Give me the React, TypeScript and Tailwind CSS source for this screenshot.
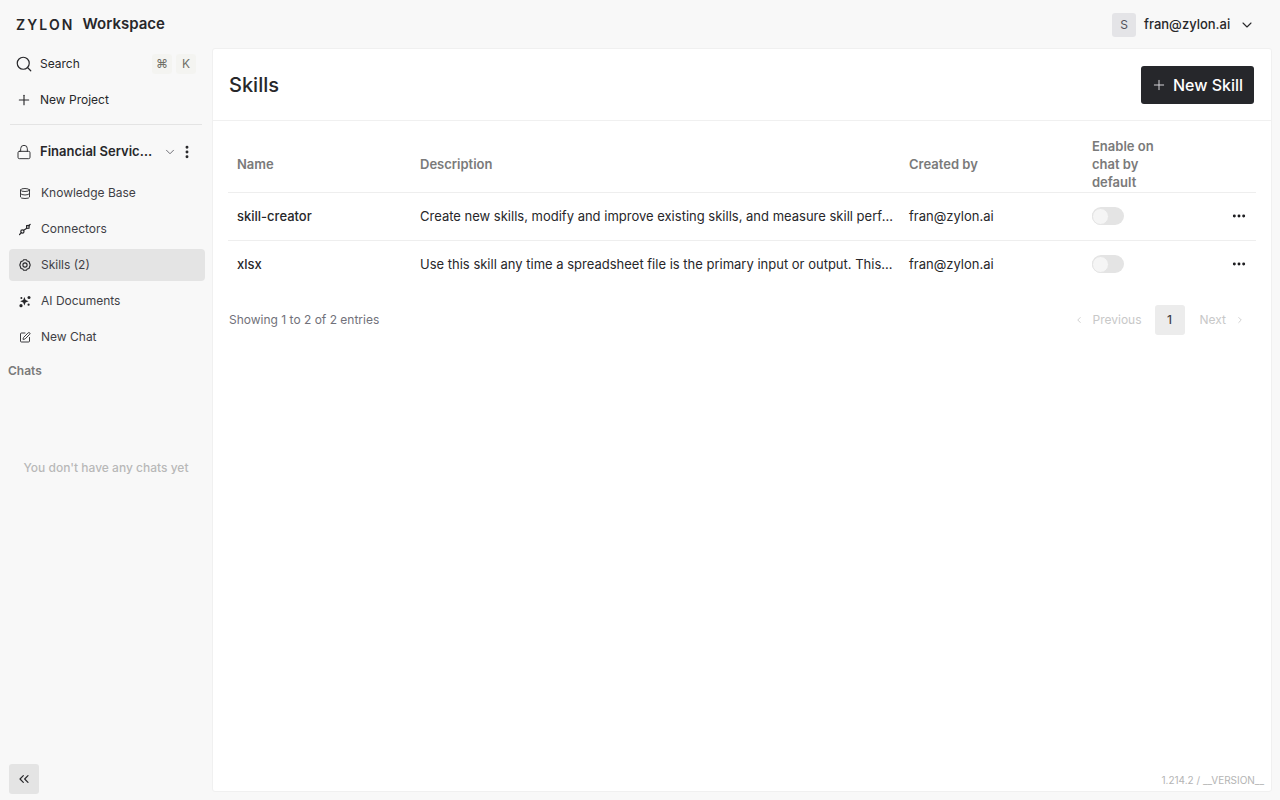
import { ChevronDown, ChevronLeft, ChevronRight, ChevronsLeft, Database, Ellipsis, EllipsisVertical, Lock, Plus, Search, SquarePen } from 'lucide-react'

const font = { fontFamily: 'Inter, "Liberation Sans", sans-serif' }

function ConnectorsIcon() {
  return (
    <svg width="13" height="13" viewBox="0 0 12 12" fill="none" stroke="currentColor" strokeWidth="1.2" strokeLinecap="round">
      <circle cx="3.4" cy="8" r="1.6" />
      <path d="M7.6 2.2 L10.2 2 L10 4.6 L7.6 4.8 Z" />
      <path d="M0.6 11 L2.3 9.2 M4.7 6.8 L7.4 5 M10 2 L11.2 0.8" />
    </svg>
  )
}

function SkillsIcon() {
  return (
    <svg width="12" height="12" viewBox="0 0 12 12" fill="none" stroke="currentColor" strokeWidth="1.1" strokeLinejoin="round">
      <path d="M4.6 0.8 H7.4 L8.2 2 L10 2.5 L11.2 6 L10 9.5 L8.2 10 L7.4 11.2 H4.6 L3.8 10 L2 9.5 L0.8 6 L2 2.5 L3.8 2 Z" />
      <circle cx="6" cy="6" r="2.1" />
    </svg>
  )
}

function AiDocsIcon() {
  return (
    <svg width="13" height="13" viewBox="0 0 12 12" fill="currentColor">
      <path d="M5.4 1.6 L6.6 4.6 L9.6 5.8 L6.6 7 L5.4 10 L4.2 7 L1.2 5.8 L4.2 4.6 Z" />
      <circle cx="10" cy="2" r="1.5" />
      <circle cx="2" cy="10.2" r="1.6" />
      <circle cx="9.6" cy="9.2" r="1.1" />
      <circle cx="2.4" cy="2.6" r="1" />
    </svg>
  )
}

const navItems = [
  { label: 'Knowledge Base', icon: <Database size={13} strokeWidth={1.8} /> },
  { label: 'Connectors', icon: <ConnectorsIcon /> },
  { label: 'Skills (2)', icon: <SkillsIcon />, active: true },
  { label: 'AI Documents', icon: <AiDocsIcon /> },
  { label: 'New Chat', icon: <SquarePen size={13} strokeWidth={1.8} /> },
]

const skills = [
  {
    name: 'skill-creator',
    description:
      'Create new skills, modify and improve existing skills, and measure skill performance across evaluation runs and benchmarks.',
  },
  {
    name: 'xlsx',
    description:
      'Use this skill any time a spreadsheet file is the primary input or output. This includes opening, reading and editing files.',
  },
]

function Sidebar() {
  return (
    <aside className="flex w-[212px] shrink-0 flex-col">
      <div className="flex h-[36px] items-center justify-between pl-[15px] pr-[16px] text-[12px] text-[#27272a]">
        <div className="flex items-center gap-[7px]">
          <Search size={18} strokeWidth={1.6} />
          <span>Search</span>
        </div>
        <div className="flex items-center gap-[4px] text-[12px] text-[#6f6f66]">
          <span className="flex h-[20px] w-[20px] items-center justify-center rounded-[3px] bg-[#f4f4f1]">⌘</span>
          <span className="flex h-[20px] w-[20px] items-center justify-center rounded-[3px] bg-[#f4f4f1]">K</span>
        </div>
      </div>
      <div className="flex h-[36px] items-center gap-[8px] pl-[16px] text-[12px] text-[#27272a]">
        <Plus size={16} strokeWidth={1.7} />
        <span>New Project</span>
      </div>
      <div className="ml-[10px] mr-[10px] mt-[6px] border-t border-[#e4e4e4]" />
      <div className="mt-[9px] flex h-[36px] items-center pl-[16px] text-[#27272a]">
        <Lock size={16} strokeWidth={1.4} />
        <span className="ml-[8px] w-[114px] truncate text-[13px] font-semibold">Financial Services</span>
        <ChevronDown size={14} strokeWidth={1.4} className="ml-[9px] text-[#52525b]" />
        <EllipsisVertical size={16} strokeWidth={2.4} className="ml-[2px]" />
      </div>
      <nav className="mt-[7px] flex flex-col gap-[4px] pl-[9px] pr-[7px]">
        {navItems.map((item) => (
          <div
            key={item.label}
            className={`flex h-[32px] items-center gap-[10px] rounded-[4px] pl-[10px] text-[12px] text-[#3f3f46] ${
              item.active ? 'bg-[#e4e4e4]' : ''
            }`}
          >
            <span className="flex w-[12px] justify-center text-[#27272a]">{item.icon}</span>
            <span>{item.label}</span>
          </div>
        ))}
      </nav>
      <div className="ml-[8px] mt-[10px] text-[12px] font-semibold leading-[16px] text-[#7a7a7a]">Chats</div>
      <div className="mt-[81px] text-center text-[12px] font-medium leading-[16px] text-[#b8b8b8]">
        You don't have any chats yet
      </div>
      <div className="mt-auto pb-[6px] pl-[9px]">
        <button type="button" className="flex h-[30px] w-[30px] items-center justify-center rounded-[3px] bg-[#e4e4e4] text-[#27272a]">
          <ChevronsLeft size={16} strokeWidth={1.8} />
        </button>
      </div>
    </aside>
  )
}

function Toggle() {
  return (
    <div className="flex h-[18px] w-[32px] items-center rounded-full bg-[#e4e4e4]">
      <div className="h-[17px] w-[17px] rounded-full border border-[#e4e4e4] bg-[#f5f5f5]" />
    </div>
  )
}

function SkillsTable() {
  return (
    <table className="ml-[15px] w-[1028px] table-fixed border-collapse text-[13px] text-[#27272a]">
      <colgroup>
        <col className="w-[184px]" />
        <col className="w-[489px]" />
        <col className="w-[183px]" />
        <col className="w-[172px]" />
      </colgroup>
      <thead>
        <tr className="h-[56px] border-b border-[#eeeeee] text-left text-[13px] leading-[18px] text-[#7a7a7a]">
          <th className="pl-[9px] pr-[8px] font-semibold">Name</th>
          <th className="px-[8px] font-semibold">Description</th>
          <th className="px-[8px] font-semibold">Created by</th>
          <th className="px-[8px] font-semibold">
            <div className="w-[80px]">Enable on chat by default</div>
          </th>
        </tr>
      </thead>
      <tbody>
        {skills.map((skill) => (
          <tr
            key={skill.name}
            className="h-[48px] border-b border-[#eeeeee] last:border-b-0 [&:first-child>td:not(:last-child)]:pt-[2px]"
          >
            <td className="pl-[9px] pr-[8px] font-medium">{skill.name}</td>
            <td className="truncate px-[8px]">{skill.description}</td>
            <td className="px-[8px]">fran@zylon.ai</td>
            <td className="px-[8px]">
              <div className="flex items-center justify-between pr-[1px]">
                <Toggle />
                <Ellipsis size={16} strokeWidth={2.4} className="text-[#18181b]" />
              </div>
            </td>
          </tr>
        ))}
      </tbody>
    </table>
  )
}

export default function App() {
  return (
    <div style={font} className="flex h-[800px] w-[1280px] flex-col overflow-hidden bg-[#f8f8f8]">
      <header className="flex h-[46px] shrink-0 items-center justify-between pl-[16px] pr-[25px] pt-[3px]">
        <div className="flex items-center gap-[8px] text-[#27272a]">
          <span className="text-[14px] font-semibold tracking-[2.1px]">ZYLON</span>
          <span className="text-[15px] font-semibold">Workspace</span>
        </div>
        <div className="flex items-center text-[#27272a]">
          <span className="flex h-[24px] w-[24px] items-center justify-center rounded-[3px] bg-[#e4e4e7] text-[12px] text-[#52525b]">S</span>
          <span className="ml-[8px] w-[87px] whitespace-nowrap text-[13px] font-medium">fran@zylon.ai</span>
          <ChevronDown size={16} strokeWidth={1.6} className="ml-[8px]" />
        </div>
      </header>
      <div className="flex min-h-0 flex-1 pr-[8px]">
        <Sidebar />
        <main className="relative mb-[8px] mt-[2px] flex flex-1 flex-col rounded-[3px] border border-[#f0f0f0] bg-white">
          <div className="flex h-[72px] shrink-0 items-center justify-between border-b border-[#f0f0f0] pl-[16px] pr-[17px]">
            <h1 className="text-[20px] font-medium text-[#27272a]">Skills</h1>
            <button type="button" className="flex h-[38px] w-[113px] items-center gap-[6px] rounded-[3px] bg-[#26272b] pl-[10px] text-[16px] font-medium text-white">
              <Plus size={16} strokeWidth={1.5} className="text-[#d4d4d8]" />
              New Skill
            </button>
          </div>
          <div className="mt-[15px]">
            <SkillsTable />
          </div>
          <div className="mt-[17px] flex items-center justify-between pl-[16px] pr-[17px]">
            <span className="text-[12px] text-[#71717a]">Showing 1 to 2 of 2 entries</span>
            <div className="flex items-center text-[12px] text-[#c8c8c8]">
              <ChevronLeft size={10} />
              <span className="ml-[8px]">Previous</span>
              <span className="ml-[13px] flex h-[30px] w-[30px] items-center justify-center rounded-[3px] bg-[#ececec] font-medium text-[#3f3f46]">1</span>
              <span className="ml-[15px]">Next</span>
              <ChevronRight size={10} className="ml-[9px] mr-[9px]" />
            </div>
          </div>
          <span className="absolute bottom-[3px] right-[7px] text-[10px] text-[#b4b4b4]">1.214.2 / __VERSION__</span>
        </main>
      </div>
    </div>
  )
}
